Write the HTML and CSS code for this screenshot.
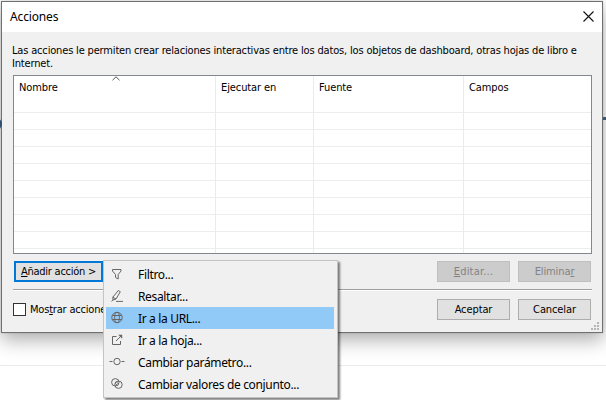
FILE: index.html
```html
<!DOCTYPE html>
<html lang="es">
<head>
<meta charset="utf-8">
<title>Acciones</title>
<link rel="stylesheet" href="styles.css">
</head>
<body>
<div class="page-rule"></div>
<div class="page-dot"></div>
<div class="page-dash"></div>
<main class="dialog">
  <header class="titlebar">
    <h1 class="title">Acciones</h1>
    <svg class="close" width="11" height="11" viewBox="0 0 11 11"><path d="M.5 .5l10 10M10.5 .5l-10 10" stroke="#111" stroke-width="1.1"/></svg>
  </header>
  <section class="content">
    <p class="intro">Las acciones le permiten crear relaciones interactivas entre los datos, los objetos de dashboard, otras hojas de libro e<br>Internet.</p>
    <div class="table">
      <div class="columns">
        <span>Nombre</span><span>Ejecutar en</span><span>Fuente</span><span>Campos</span>
      </div>
      <svg class="sort" width="8" height="5" viewBox="0 0 8 5"><path d="M.5 4.200L4 .8l3.500 3.400" fill="none" stroke="#555"/></svg>
    </div>
    <div class="row">
      <button class="btn add"><span><u>A</u>ñadir acción &gt;</span></button>
      <button class="btn off edit"><u>E</u>ditar...</button>
      <button class="btn off"><span>Elimina<u>r</u></span></button>
    </div>
    <div class="separator"></div>
    <div class="row footer">
      <label class="check"><i class="box"></i><span>Mos<u>t</u>rar acciones</span></label>
      <button class="btn">Aceptar</button>
      <button class="btn">Cancelar</button>
    </div>
  </section>
  <svg class="grip" width="8" height="8" viewBox="0 0 8 8" fill="#b5b5b5"><path d="M6 0h2v2h-2zM3 3h2v2h-2zM6 3h2v2h-2zM0 6h2v2h-2zM3 6h2v2h-2zM6 6h2v2h-2z"/></svg>
</main>
<nav class="menu">
  <div class="item"><svg viewBox="0 0 16 16"><path d="M3.500 3.500h8.500v1.500L9.200 8.500v4.500L6.500 11.500v-3L3.500 5z"/></svg><span>Filtro...</span></div>
  <div class="item"><svg viewBox="0 0 16 16"><path d="M9.300 2.500l2 1.300-4.300 7.200-3 1-.2-2.800zM3.800 9.200l3.200 1.800M2.500 13.300l1.700-1.500M7 13.400h7"/></svg><span>Resaltar...</span></div>
  <div class="item active"><svg viewBox="0 0 16 16"><circle cx="8" cy="7.500" r="5.200"/><ellipse cx="8" cy="7.500" rx="2.400" ry="5.200"/><path d="M3.300 5.500h9.400M3.300 9.500h9.400"/></svg><span>Ir a la URL...</span></div>
  <div class="item"><svg viewBox="0 0 16 16"><path d="M7.500 4.500H3.500v8h8V9M7 9l4.500-4.500"/><path class="solid" d="M9.200 2.700h4v4z"/></svg><span>Ir a la hoja...</span></div>
  <div class="item"><svg viewBox="0 0 16 16"><circle cx="8" cy="7.500" r="3.200"/><path d="M.5 7.500h3M12.500 7.500h3"/></svg><span>Cambiar parámetro...</span></div>
  <div class="item"><svg viewBox="0 0 16 16"><circle cx="6.300" cy="6.300" r="3.700"/><circle cx="9.500" cy="8.700" r="3.700"/><path d="M6.200 7.300l2 2M7.500 6l2 2"/></svg><span>Cambiar valores de conjunto...</span></div>
</nav>
</body>
</html>
```
FILE: styles.css
```css
* { box-sizing: border-box; }
body {
  margin: 0;
  width: 606px;
  height: 400px;
  overflow: hidden;
  position: relative;
  background: #fff;
  color: #000;
  font: 11px/13px "DejaVu Sans Condensed", "DejaVu Sans", sans-serif;
  font-stretch: condensed;
}
.page-rule { position: absolute; top: 365px; left: 0; width: 606px; height: 1px; background: #ebebeb; }
.page-dot { position: absolute; left: -10px; top: 118px; width: 12px; height: 12px; border-radius: 50%; background: #2f4f6f; z-index: 1; }
.page-dash { position: absolute; left: 603px; top: 117px; width: 3px; height: 3px; background: #3c5878; z-index: 1; }
.dialog {
  position: relative;
  width: 602px;
  height: 332px;
  margin: 1px 0 0 1px;
  border: 1px solid #707070;
  background: #f0f0f0;
  box-shadow: 0 0 2px rgba(0,0,0,.15), 0 7px 18px rgba(0,0,0,.32);
}
.titlebar { display: flex; justify-content: space-between; align-items: center; height: 30px; padding: 0 8px; background: #fff; }
.title { margin: 0; font: 12px/16px "Noto Sans", sans-serif; letter-spacing: -.15px; }
.close { margin-top: -2px; }
.content { padding: 12px 10px 0 11px; }
.intro { margin: 0 0 5px -1px; white-space: nowrap; letter-spacing: -.168px; }
.table {
  position: relative;
  width: 579px;
  height: 179px;
  border: 1px solid #828790;
  background: repeating-linear-gradient(#ededed 0 1px, transparent 1px 17px) 0 36px / 100% 200px no-repeat #fff;
}
.columns { display: grid; grid-template-columns: 202px 98px 150px 1fr; height: 100%; }
.columns span { padding: 5px 0 0 5px; border-right: 1px solid #ebebeb; letter-spacing: -.1px; }
.columns span:last-child { border-right: 0; }
.sort { position: absolute; left: 98px; top: 0; }
.row { display: flex; align-items: center; gap: 8px; padding: 0 1px; margin-top: 7px; }
.btn { width: 73px; height: 21px; padding: 0; border: 1px solid #adadad; background: #e1e1e1; color: #000; font: inherit; letter-spacing: -.1px; white-space: nowrap; }
.add { width: 89px; margin-right: auto; border: 2px solid #0078d7; letter-spacing: -.25px; }
.off { background: #ccc; border-color: #bfbfbf; color: #838383; }
.edit { letter-spacing: .2px; }
u { text-underline-offset: 1px; }
.separator { height: 2px; margin-top: 7px; background: #a0a0a0; border-bottom: 1px solid #fff; }
.footer { margin-top: 8px; padding-left: 0; }
.check { display: flex; align-items: center; gap: 4px; margin-right: auto; letter-spacing: -.2px; }
.box { width: 13px; height: 13px; border: 1px solid #333; background: #fff; }
.grip { position: absolute; right: 3px; bottom: 2px; }
.menu {
  position: absolute;
  left: 103px;
  top: 260px;
  width: 235px;
  height: 138px;
  padding: 2px;
  border: 1px solid #c4c4c4;
  background: #f0f0f0;
  box-shadow: 2px 2px 2px rgba(0,0,0,.5);
  font: 12px/22px "Noto Sans", sans-serif;
  letter-spacing: -.34px;
  z-index: 2;
}
.item { display: flex; align-items: center; width: 228px; height: 22px; padding-left: 3px; gap: 13px; white-space: nowrap; }
.item span { padding-top: 1px; }
.item svg { width: 16px; height: 16px; fill: none; stroke: #666; stroke-width: 1; }
.item .solid { fill: #666; stroke: none; }
.active { background: #91c9f7; }
```
